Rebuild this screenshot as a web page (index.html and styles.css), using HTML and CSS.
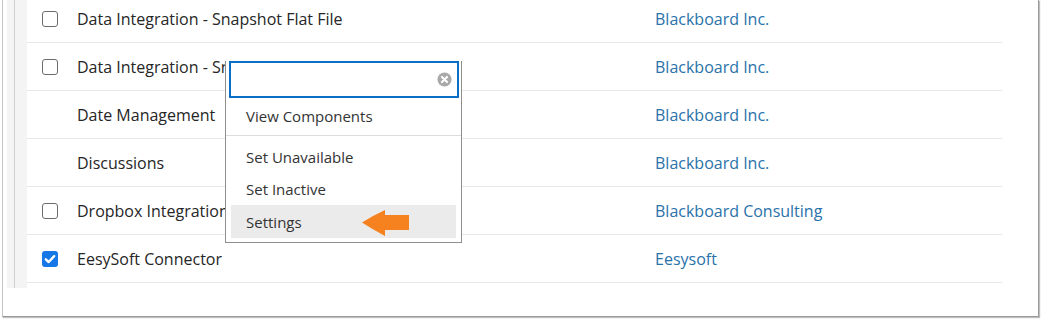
FILE: index.html
```html
<!DOCTYPE html>
<html>
<head>
<meta charset="utf-8">
<link rel="stylesheet" href="styles.css">
</head>
<body>
<div class="frame">
  <div class="strip"><div class="strip-line"></div></div>
  <div class="list">
    <div class="row"><div class="cb-cell"><span class="cb"></span></div><div class="name">Data Integration - Snapshot Flat File</div><div class="vendor">Blackboard Inc.</div></div>
    <div class="row"><div class="cb-cell"><span class="cb"></span></div><div class="name">Data Integration - Snapshot XML</div><div class="vendor">Blackboard Inc.</div></div>
    <div class="row"><div class="cb-cell"></div><div class="name">Date Management</div><div class="vendor">Blackboard Inc.</div></div>
    <div class="row"><div class="cb-cell"></div><div class="name">Discussions</div><div class="vendor">Blackboard Inc.</div></div>
    <div class="row"><div class="cb-cell"><span class="cb"></span></div><div class="name">Dropbox Integration</div><div class="vendor">Blackboard Consulting</div></div>
    <div class="row"><div class="cb-cell"><span class="cb checked"><svg viewBox="0 0 16 16" width="16" height="16"><path d="M3.8 8.3 L6.7 11 L12.2 5.2" fill="none" stroke="#fff" stroke-width="2.4" stroke-linecap="round" stroke-linejoin="round"/></svg></span></div><div class="name">EesySoft Connector</div><div class="vendor">Eesysoft</div></div>
  </div>
</div>

<div class="menu">
  <div class="search">
    <span class="clear"><svg viewBox="0 0 16 16" width="15" height="15"><circle cx="8" cy="8" r="7.5" fill="#a9a9a9"/><path d="M5.3 5.3 L10.7 10.7 M10.7 5.3 L5.3 10.7" stroke="#fff" stroke-width="2.2" stroke-linecap="round"/></svg></span>
  </div>
  <div class="item first">View Components</div>
  <div class="sep"></div>
  <div class="item">Set Unavailable</div>
  <div class="item">Set Inactive</div>
  <div class="item active">Settings</div>
</div>

<svg class="arrow" viewBox="0 0 48 28" width="48" height="28"><path d="M0 13.5 Q10 7 23 1 L23 6 L47 6 L47 21 L23 21 L23 27 Q10 20 0 13.5 Z" fill="#f5811f"/></svg>
</body>
</html>
```
FILE: styles.css
```css
html, body {
  margin: 0;
  padding: 0;
  background: #fff;
  font-family: "Open Sans", "Noto Sans", sans-serif;
}
body {
  width: 1042px;
  height: 319px;
  position: relative;
  overflow: hidden;
}
.frame {
  margin-left: 2px;
  width: 1037px;
  height: 317px;
  border-left: 1px solid #c4c4c4;
  border-right: 1px solid #9a9a9a;
  border-bottom: 1px solid #9a9a9a;
  box-shadow: 1px 1px 1px rgba(0,0,0,0.25);
  box-sizing: border-box;
  display: flex;
  padding-left: 4px;
  padding-right: 36px;
  background: #fff;
}
.strip {
  width: 20px;
  height: 288px;
  background: #f4f4f4;
  position: relative;
  flex: none;
}
.strip-line {
  margin-left: 7px;
  width: 1px;
  height: 100%;
  background: #cfcfcf;
}
.list {
  flex: 1;
  margin-top: -5px;
}
.row {
  display: flex;
  align-items: center;
  height: 47px;
  border-bottom: 1px solid #e8e8e8;
  box-sizing: content-box;
  font-size: 16px;
}
.cb-cell {
  width: 50px;
  flex: none;
  padding-left: 15px;
  box-sizing: border-box;
  display: flex;
  align-items: center;
}
.cb {
  width: 16px;
  height: 16px;
  box-sizing: border-box;
  border: 1.5px solid #6b6b6b;
  border-radius: 3px;
  display: block;
}
.cb.checked {
  border: none;
  background: #1677e6;
}
.cb svg { display: block; }
.name {
  width: 578px;
  flex: none;
  color: #262626;
}
.vendor {
  color: #2a72aa;
}
.menu {
  position: absolute;
  left: 225px;
  top: 61px;
  width: 237px;
  height: 182px;
  box-sizing: border-box;
  border: 1px solid #8f8f8f;
  border-top: none;
  background: #fff;
  padding: 0 5px 5px 5px;
  font-size: 15px;
  color: #333;
}
.search {
  margin: 0 -3px 0 -2px;
  height: 37px;
  box-sizing: border-box;
  border: 2px solid #0b6fc8;
  display: flex;
  align-items: center;
  justify-content: flex-end;
  padding-right: 5px;
}
.clear svg { display: block; }
.item {
  height: 32px;
  line-height: 32px;
  padding-left: 15px;
}
.item.first {
  height: 37px;
  line-height: 36px;
}
.sep {
  height: 1px;
  background: #dcdcdc;
  margin: 0 -5px 5px -5px;
}
.item.active {
  background: #ebebeb;
  height: 33px;
  line-height: 34px;
}
.arrow {
  position: absolute;
  left: 362px;
  top: 209px;
}
```
